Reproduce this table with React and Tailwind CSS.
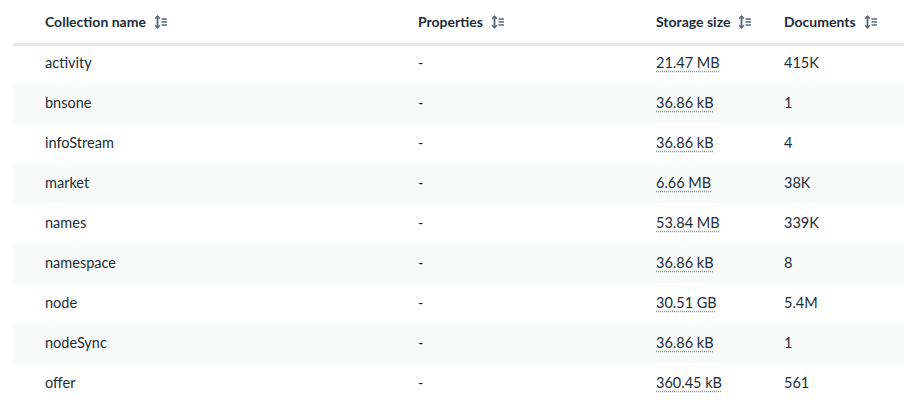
import React from 'react'

const rows = [
  { name: 'activity', size: '21.47 MB', docs: '415K' },
  { name: 'bnsone', size: '36.86 kB', docs: '1' },
  { name: 'infoStream', size: '36.86 kB', docs: '4' },
  { name: 'market', size: '6.66 MB', docs: '38K' },
  { name: 'names', size: '53.84 MB', docs: '339K' },
  { name: 'namespace', size: '36.86 kB', docs: '8' },
  { name: 'node', size: '30.51 GB', docs: '5.4M' },
  { name: 'nodeSync', size: '36.86 kB', docs: '1' },
  { name: 'offer', size: '360.45 kB', docs: '561' },
]

function SortIcon(){
  return (
    <svg width="16" height="16" viewBox="0 0 16 16" fill="none" className="ml-[7px] text-[#5c6c75]">
      <path d="M4.5 2.5v11" stroke="currentColor" strokeWidth="1.9" />
      <path d="M2.2 4.8 4.5 2.2l2.3 2.6M2.2 11.2l2.3 2.6 2.3-2.6" stroke="currentColor" strokeWidth="1.6" fill="none" />
      <path d="M8.5 5h5.5M8.5 8h5.5M8.5 11h5.5" stroke="currentColor" strokeWidth="1.5" />
    </svg>
  )
}

const cols = 'grid grid-cols-[405px_238px_128px_1fr]'

export default function App(){
  return (
    <div className="w-[904px] h-[419px] bg-white pl-[13px] text-[#1c2d38] overflow-hidden" style={{ fontFamily: 'Lato, "Liberation Sans", sans-serif' }}>
      <div className={`${cols} h-[46px] border-b-[3px] border-[#e8e8e8] items-center text-[14px] font-bold`}>
        <div className="pl-[32px] flex items-center">Collection name <SortIcon /></div>
        <div className="flex items-center">Properties <SortIcon /></div>
        <div className="flex items-center">Storage size <SortIcon /></div>
        <div className="flex items-center">Documents <SortIcon /></div>
      </div>
      {rows.map((r, i) => (
        <div key={r.name} className={`${cols} items-center text-[14.5px] ${i === 0 ? 'h-[37px] pb-[3px]' : 'h-[40px]'} ${i % 2 === 1 ? 'bg-[#f9fbfa]' : ''}`}>
          <div className="pl-[32px]">{r.name}</div>
          <div>-</div>
          <div><span className="underline decoration-dotted decoration-[#889397] underline-offset-[3px]">{r.size}</span></div>
          <div>{r.docs}</div>
        </div>
      ))}
    </div>
  )
}
